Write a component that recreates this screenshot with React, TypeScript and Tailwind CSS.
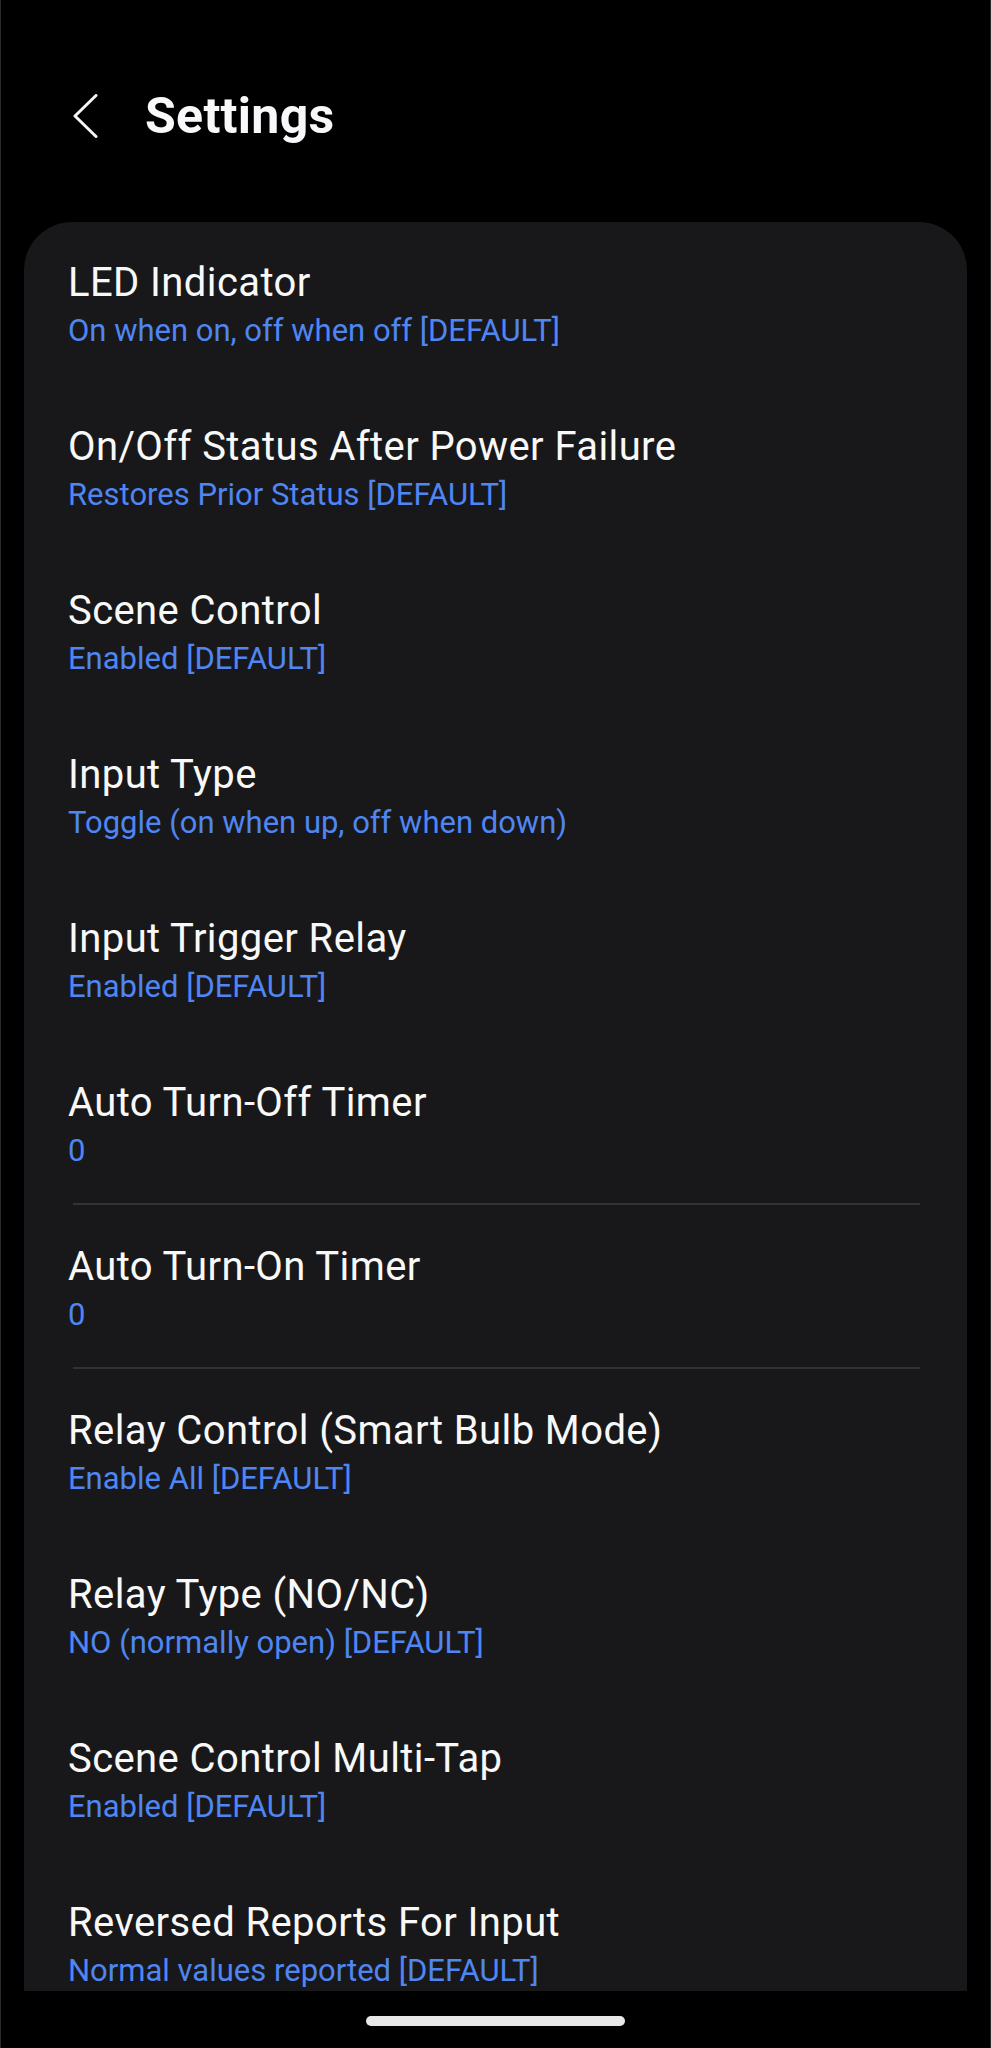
import React from 'react';

interface SettingItem {
  title: string;
  value: string;
  divider?: boolean;
}

const items: SettingItem[] = [
  { title: 'LED Indicator', value: 'On when on, off when off [DEFAULT]' },
  { title: 'On/Off Status After Power Failure', value: 'Restores Prior Status [DEFAULT]' },
  { title: 'Scene Control', value: 'Enabled [DEFAULT]' },
  { title: 'Input Type', value: 'Toggle (on when up, off when down)' },
  { title: 'Input Trigger Relay', value: 'Enabled [DEFAULT]' },
  { title: 'Auto Turn-Off Timer', value: '0', divider: true },
  { title: 'Auto Turn-On Timer', value: '0', divider: true },
  { title: 'Relay Control (Smart Bulb Mode)', value: 'Enable All [DEFAULT]' },
  { title: 'Relay Type (NO/NC)', value: 'NO (normally open) [DEFAULT]' },
  { title: 'Scene Control Multi-Tap', value: 'Enabled [DEFAULT]' },
  { title: 'Reversed Reports For Input', value: 'Normal values reported [DEFAULT]' },
];

const App: React.FC = () => {
  return (
    <div
      className="w-[991px] h-[2048px] bg-black border-x border-[#2a2a2a] overflow-hidden flex flex-col"
      style={{ fontFamily: 'Roboto, "Noto Sans", sans-serif' }}
    >
      {/* Header */}
      <div className="flex items-center pt-[86px] pl-[72px] h-[146px]">
        <button className="w-[26px] h-[44px] flex items-center">
          <svg width="26" height="44" viewBox="0 0 26 44" fill="none">
            <path d="M23 1.5L2 22l21 20.5" stroke="#f5f5f7" strokeWidth="3" strokeLinecap="round" strokeLinejoin="round" />
          </svg>
        </button>
        <h1 className="ml-[46px] text-[50px] leading-[60px] font-bold text-[#f8f8fa] tracking-[0.3px]">
          Settings
        </h1>
      </div>

      {/* Card */}
      <div className="mt-[76px] mx-[23px] bg-[#18181a] rounded-t-[48px] pt-[37px] pl-[44px] pr-[36px] flex flex-col">
        {items.map((item, i) => (
          <React.Fragment key={item.title}>
            <div className="flex flex-col">
              <div className="text-[40px] leading-[48px] tracking-[0.4px] text-[#f8f8f8]">{item.title}</div>
              <div className="mt-[4px] text-[31px] leading-[40px] text-[#4f86f2]">{item.value}</div>
            </div>
            {i < items.length - 1 &&
              (item.divider ? (
                <div className="pt-[32px] pb-[38px] pl-[5px] pr-[11px]">
                  <div className="h-[2px] bg-[#323234]" />
                </div>
              ) : (
                <div className="h-[72px]" />
              ))}
          </React.Fragment>
        ))}
      </div>

      {/* Home indicator */}
      <div className="flex justify-center pt-[25px]">
        <div className="w-[259px] h-[10px] rounded-full bg-[#e8e8e8]" />
      </div>
    </div>
  );
};

export default App;
